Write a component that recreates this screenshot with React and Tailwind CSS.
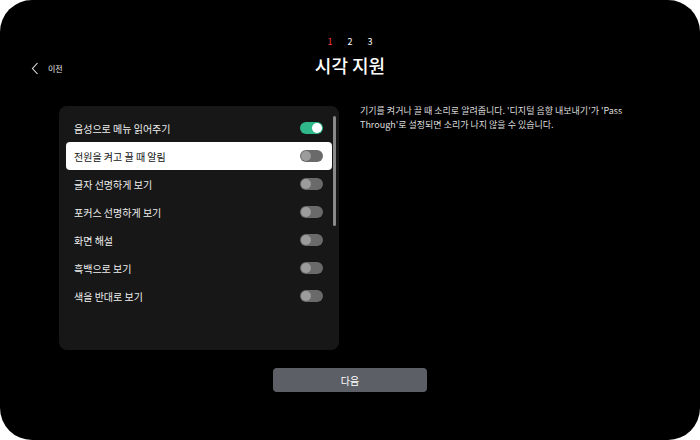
import React from "react";

const items = [
  { label: "음성으로 메뉴 읽어주기", on: true },
  { label: "전원을 켜고 끌 때 알림", on: false, focus: true },
  { label: "글자 선명하게 보기", on: false },
  { label: "포커스 선명하게 보기", on: false },
  { label: "화면 해설", on: false },
  { label: "흑백으로 보기", on: false },
  { label: "색을 반대로 보기", on: false },
];

function Toggle({ on }) {
  if (on) {
    return (
      <div className="w-[23px] h-[12px] rounded-full bg-[#2fb98b] flex items-center justify-end pr-[1px]">
        <div className="w-[10px] h-[10px] rounded-full bg-white" />
      </div>
    );
  }
  return (
    <div className="w-[23px] h-[12px] rounded-full bg-[#6a6a6a] flex items-center pl-[1px]">
      <div className="w-[10px] h-[10px] rounded-full bg-[#9c9c9c]" />
    </div>
  );
}

export default function App() {
  return (
    <div className="w-[700px] h-[440px] bg-white" style={{ fontFamily: '"Noto Sans CJK KR", "Noto Sans", sans-serif' }}>
      <div className="w-full h-full bg-black rounded-[32px] flex flex-col relative">
        <div className="flex justify-center gap-[15px] pt-[36px] text-[9px] leading-[12px] text-white">
          <span className="text-[#ff3b3b]">1</span>
          <span>2</span>
          <span>3</span>
        </div>
        <div className="flex items-center h-[30px] mt-[2px] relative">
          <div className="absolute left-[31px] top-[12px] flex items-center gap-[9px]">
            <svg width="8" height="13" viewBox="0 0 8 13">
              <path d="M6.5 1 L1.5 6.5 L6.5 12" fill="none" stroke="#e5e5e5" strokeWidth="1.1" />
            </svg>
            <span className="text-[8px] text-[#e5e5e5]">이전</span>
          </div>
          <div className="w-full text-center text-[18px] font-medium text-white leading-[30px]">시각 지원</div>
        </div>
        <div className="flex mt-[26px] pl-[59px] gap-[21px]">
          <div className="w-[280px] h-[244px] bg-[#171717] rounded-[8px] relative pt-[8px] px-[7px]">
            <div className="absolute right-[3px] top-[10px] w-[3px] h-[110px] rounded-full bg-[#8a8a8a]" />
            {items.map((it) => (
              <div
                key={it.label}
                className={`h-[28px] w-[266px] flex items-center justify-between pl-[8px] pr-[9px] rounded-[4px] ${it.focus ? "bg-white text-[#111]" : "text-[#eeeeee]"}`}
              >
                <span className="text-[10px]">{it.label}</span>
                <Toggle on={it.on} />
              </div>
            ))}
          </div>
          <div className="w-[275px] text-[9px] leading-[14px] text-[#dddddd] -mt-[2px]">
            기기를 켜거나 끌 때 소리로 알려줍니다. '디지털 음향 내보내기'가 'Pass Through'로 설정되면 소리가 나지 않을 수 있습니다.
          </div>
        </div>
        <div className="flex justify-center mt-[18px]">
          <div className="w-[154px] h-[24px] bg-[#5c5f66] rounded-[4px] flex items-center justify-center text-[10px] text-white">
            다음
          </div>
        </div>
      </div>
    </div>
  );
}
